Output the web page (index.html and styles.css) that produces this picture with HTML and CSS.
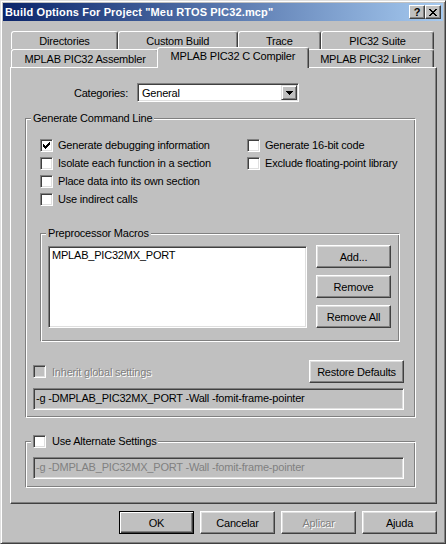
FILE: index.html
```html
<!DOCTYPE html>
<html lang="en">
<head>
<meta charset="UTF-8">
<meta name="viewport" content="width=device-width, initial-scale=1.0">
<title>Build Options For Project</title>
<link rel="stylesheet" href="styles.css">
</head>
<body>
<div class="window">
  <div class="titlebar">
    <span class="title">Build Options For Project "Meu RTOS PIC32.mcp"</span>
    <div class="caption-buttons">
      <span class="caption-btn help">?</span>
      <span class="caption-btn close">
        <svg width="8" height="7" viewBox="0 0 8 7" shape-rendering="crispEdges"><path d="M0 0h2v1h-2zM6 0h2v1h-2zM1 1h2v1h-2zM5 1h2v1h-2zM2 2h4v1h-4zM3 3h2v1h-2zM2 4h4v1h-4zM1 5h2v1h-2zM5 5h2v1h-2zM0 6h2v1h-2zM6 6h2v1h-2z" fill="#000"/></svg>
      </span>
    </div>
  </div>

  <div class="dialog">
    <div class="tabs">
      <div class="tab-row">
        <span class="tab">Directories</span>
        <span class="tab">Custom Build</span>
        <span class="tab">Trace</span>
        <span class="tab">PIC32 Suite</span>
      </div>
      <div class="tab-row">
        <span class="tab">MPLAB PIC32 Assembler</span>
        <span class="tab selected">MPLAB PIC32 C Compiler</span>
        <span class="tab">MPLAB PIC32 Linker</span>
      </div>
    </div>

    <div class="panel">
      <div class="category-row">
        <label class="category-label">Categories:</label>
        <div class="combo">
          <span class="combo-text">General</span>
          <span class="combo-btn">
            <svg width="7" height="4" viewBox="0 0 7 4" shape-rendering="crispEdges"><path d="M0 0h7v1h-7zM1 1h5v1h-5zM2 2h3v1h-3zM3 3h1v1h-1z" fill="#000"/></svg>
          </span>
        </div>
      </div>

      <div class="group general">
        <span class="group-title">Generate Command Line</span>
        <div class="options">
          <label class="option"><span class="check"><svg width="7" height="7" viewBox="0 0 7 7" shape-rendering="crispEdges"><path d="M0 2h1v3h-1zM1 3h1v3h-1zM2 4h1v3h-1zM3 3h1v3h-1zM4 2h1v3h-1zM5 1h1v3h-1zM6 0h1v3h-1z" fill="#000"/></svg></span>Generate debugging information</label>
          <label class="option"><span class="check"></span>Generate 16-bit code</label>
          <label class="option"><span class="check"></span>Isolate each function in a section</label>
          <label class="option"><span class="check"></span>Exclude floating-point library</label>
          <label class="option"><span class="check"></span>Place data into its own section</label>
          <span></span>
          <label class="option"><span class="check"></span>Use indirect calls</label>
        </div>

        <div class="group macros">
          <span class="group-title">Preprocessor Macros</span>
          <div class="macros-body">
            <div class="listbox">MPLAB_PIC32MX_PORT</div>
            <div class="macro-buttons">
              <button class="btn">Add...</button>
              <button class="btn">Remove</button>
              <button class="btn">Remove All</button>
            </div>
          </div>
        </div>

        <div class="inherit-row">
          <label class="option disabled"><span class="check"></span>Inherit global settings</label>
          <button class="btn restore">Restore Defaults</button>
        </div>
        <div class="field">-g -DMPLAB_PIC32MX_PORT -Wall -fomit-frame-pointer</div>
      </div>

      <div class="group alternate">
        <label class="group-title option"><span class="check"></span>Use Alternate Settings</label>
        <div class="field muted">-g -DMPLAB_PIC32MX_PORT -Wall -fomit-frame-pointer</div>
      </div>
    </div>

    <div class="actions">
      <button class="btn default">OK</button>
      <button class="btn">Cancelar</button>
      <button class="btn disabled">Aplicar</button>
      <button class="btn">Ajuda</button>
    </div>
  </div>
</div>
</body>
</html>
```

FILE: styles.css
```css
* {
  box-sizing: border-box;
}

body {
  margin: 0;
  padding: 0;
  background-color: #c0c0c0;
  font-family: "Liberation Sans", Arial, sans-serif;
  font-size: 11px;
  letter-spacing: -0.2px;
  color: #000;
}

.window {
  width: 446px;
  height: 544px;
  padding: 2px;
  background-color: #c0c0c0;
  border: 1px solid;
  border-color: #dfdfdf #404040 #404040 #dfdfdf;
  box-shadow: inset 1px 1px #fff, inset -1px -1px #808080;
}

/* Title bar */
.titlebar {
  display: flex;
  align-items: center;
  justify-content: space-between;
  height: 18px;
  padding: 0 2px 0 2px;
  background: linear-gradient(to right, #0a246a, #a6caf0);
}

.title {
  color: #fff;
  font-weight: bold;
  font-size: 11px;
  letter-spacing: 0.15px;
}

.caption-buttons {
  display: flex;
}

.caption-btn {
  display: flex;
  align-items: center;
  justify-content: center;
  width: 16px;
  height: 14px;
  background-color: #c0c0c0;
  border: 1px solid;
  border-color: #fff #404040 #404040 #fff;
  box-shadow: inset -1px -1px #808080;
  font-weight: bold;
  font-size: 11px;
  line-height: 12px;
  letter-spacing: 0;
}

/* Dialog body */
.dialog {
  padding: 10px 6px 0 7px;
}

.tabs {
  padding: 0 3px 0 1px;
}

.tab-row {
  display: flex;
  align-items: flex-end;
  height: 18px;
}

.tab {
  flex: 1 1 auto;
  height: 18px;
  text-align: center;
  line-height: 18px;
  white-space: nowrap;
  background-color: #c0c0c0;
  border: 1px solid;
  border-bottom: none;
  border-color: #fff #404040 transparent #fff;
  border-radius: 3px 3px 0 0;
  box-shadow: inset -1px 0 #808080;
}

.tab.selected {
  position: relative;
  z-index: 1;
  height: 21px;
  margin: 0 -2px -1px;
  line-height: 17px;
}

.panel {
  height: 437px;
  padding-top: 15px;
  border: 1px solid;
  border-color: #fff #404040 #404040 #fff;
  box-shadow: inset -1px -1px #808080;
}

.category-row {
  display: flex;
  align-items: center;
}

.category-label {
  width: 117px;
  text-align: right;
}

.combo {
  display: flex;
  align-items: center;
  justify-content: space-between;
  width: 162px;
  height: 19px;
  margin-left: 9px;
  padding: 2px;
  background-color: #fff;
  border: 1px solid;
  border-color: #808080 #fff #fff #808080;
  box-shadow: inset 1px 1px #404040, inset -1px -1px #dfdfdf;
}

.combo-text {
  padding-left: 2px;
}

.combo-btn {
  display: flex;
  align-items: center;
  justify-content: center;
  width: 16px;
  height: 15px;
  margin-right: -1px;
  background-color: #c0c0c0;
  border: 1px solid;
  border-color: #dfdfdf #404040 #404040 #dfdfdf;
  box-shadow: inset 1px 1px #fff, inset -1px -1px #808080;
}

/* Group boxes */
.group {
  position: relative;
  border: 1px solid;
  border-color: #808080 #fff #fff #808080;
  box-shadow: inset 1px 1px #fff, inset -1px -1px #808080;
}

.group-title {
  position: absolute;
  top: -7px;
  left: 5px;
  padding: 0 2px;
  line-height: 13px;
  background-color: #c0c0c0;
}

.general {
  margin: 16px 20px 0 14px;
  padding: 17px 11px 7px 7px;
}

.options {
  display: grid;
  grid-template-columns: 207px auto;
  margin-left: 7px;
}

.option {
  display: flex;
  align-items: center;
  gap: 5px;
  height: 18px;
  white-space: nowrap;
}

.check {
  display: flex;
  align-items: center;
  justify-content: center;
  flex: none;
  width: 13px;
  height: 13px;
  background-color: #fff;
  border: 1px solid;
  border-color: #808080 #fff #fff #808080;
  box-shadow: inset 1px 1px #404040, inset -1px -1px #dfdfdf;
}

.option.disabled {
  color: #808080;
  text-shadow: 1px 1px #fff;
}

.option.disabled .check {
  background-color: #c0c0c0;
}

.macros {
  margin: 25px 4px 0 7px;
  padding: 12px 8px 13px 7px;
}

.macros-body {
  display: flex;
  gap: 9px;
}

.listbox {
  width: 259px;
  height: 82px;
  padding: 2px 3px;
  background-color: #fff;
  border: 1px solid;
  border-color: #808080 #fff #fff #808080;
  box-shadow: inset 1px 1px #404040, inset -1px -1px #dfdfdf;
}

.macro-buttons {
  display: flex;
  flex-direction: column;
  gap: 7px;
  margin-top: -1px;
}

.btn {
  width: 75px;
  height: 23px;
  padding: 0;
  font-family: inherit;
  font-size: 11px;
  letter-spacing: -0.2px;
  color: #000;
  background-color: #c0c0c0;
  border: 1px solid;
  border-color: #fff #404040 #404040 #fff;
  border-radius: 0;
  box-shadow: inset -1px -1px #808080, inset 1px 1px #dfdfdf;
}

.btn.default {
  border-color: #000;
  box-shadow: inset 1px 1px #fff, inset -1px -1px #404040, inset -2px -2px #808080;
}

.btn.disabled {
  color: #808080;
  text-shadow: 1px 1px #fff;
}

.inherit-row {
  display: flex;
  align-items: center;
  justify-content: space-between;
  height: 23px;
  margin-top: 18px;
}

.inherit-row .option {
  gap: 6px;
}

.restore {
  width: 95px;
}

.field {
  height: 22px;
  margin-top: 5px;
  padding: 0 2px;
  line-height: 18px;
  white-space: nowrap;
  border: 1px solid;
  border-color: #808080 #fff #fff #808080;
  box-shadow: inset 1px 1px #404040, inset -1px -1px #dfdfdf;
}

.field.muted {
  margin-top: 0;
  color: #808080;
}

.alternate {
  margin: 23px 20px 0 14px;
  padding: 15px 11px 8px 7px;
}

.alternate .group-title {
  gap: 6px;
  height: 13px;
}

/* Bottom buttons */
.actions {
  display: flex;
  justify-content: flex-end;
  gap: 6px;
  margin-top: 7px;
}
```
